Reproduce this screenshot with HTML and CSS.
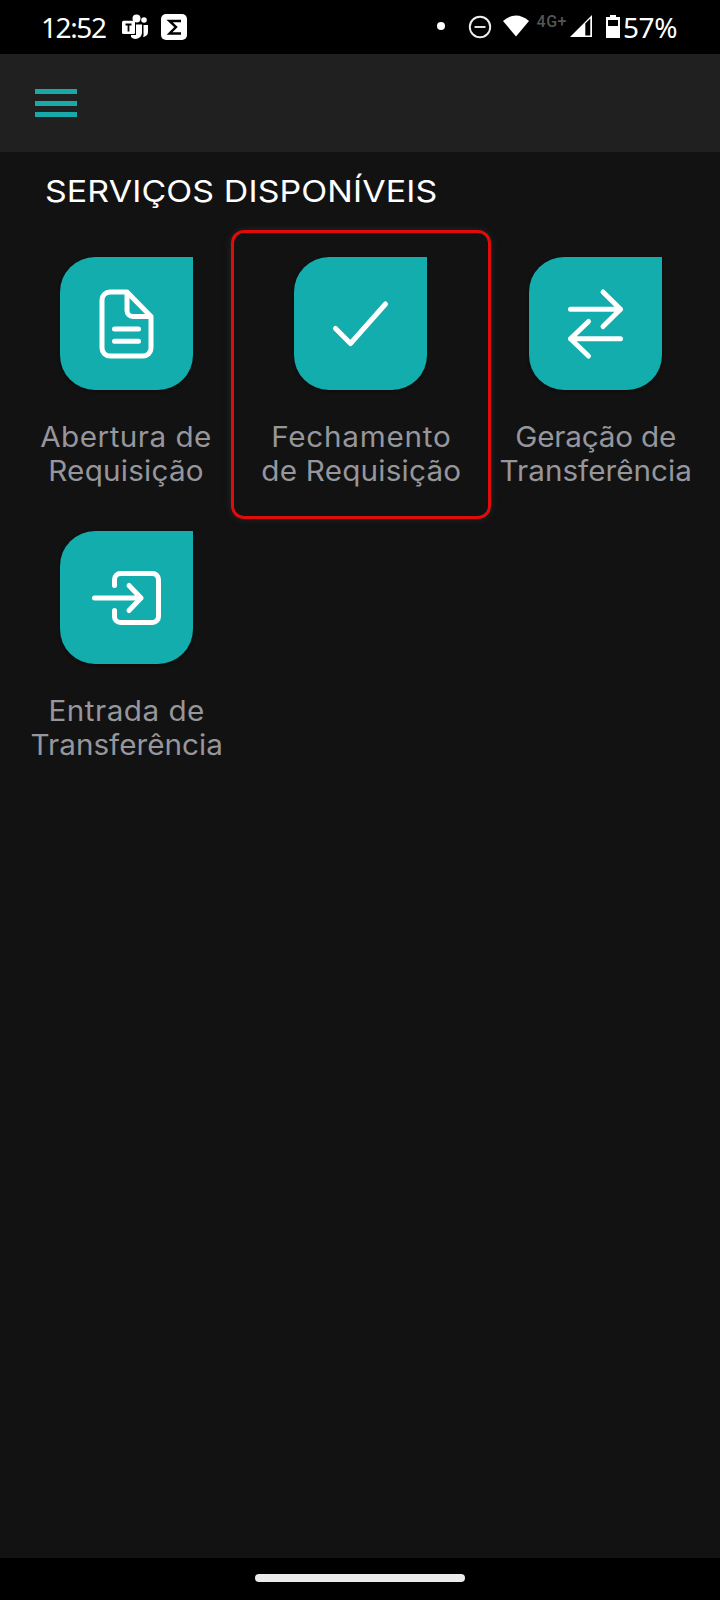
FILE: index.html
```html
<!DOCTYPE html>
<html lang="pt-BR">
<head>
<meta charset="utf-8">
<title>Serviços</title>
<link rel="stylesheet" href="styles.css">
</head>
<body>
<div class="screen">
  <div class="status">
    <span class="clock">12:52</span>
    <svg class="teams" width="28" height="26" viewBox="0 0 28 26" fill="#fff">
      <circle cx="14.500" cy="4.500" r="4"/><circle cx="22" cy="6" r="2.800"/>
      <path d="M14 10.500h6v8.500a6.500 6.500 0 0 1-11 4v-2h5z"/>
      <path d="M21.500 11H26v7a5 5 0 0 1-5 5q1-2 .5-4z"/>
      <rect x="0" y="6.700" width="13" height="13.300" rx="1.500"/>
      <path d="M3.500 10.500h6M6.500 10.500v7" fill="none" stroke="#000" stroke-width="1.800"/>
      <path d="M13.500 8.500v12H9" fill="none" stroke="#000" stroke-width="1"/>
    </svg>
    <svg class="sigma" width="26" height="26" viewBox="0 0 26 26">
      <rect width="26" height="26" rx="5" fill="#fff"/>
      <path d="M20 7H8.500l6.500 6-6.500 6.500H20" fill="none" stroke="#000" stroke-width="2.400"/>
    </svg>
    <svg class="indicators" width="186" height="30" viewBox="0 0 186 30">
      <circle cx="5" cy="14" r="4" fill="#fff"/>
      <circle cx="44" cy="15" r="10.200" fill="none" stroke="#eee" stroke-width="1.900"/>
      <path d="M38.500 15h11" stroke="#eee" stroke-width="1.900"/>
      <path d="M67 9Q80 -2 93 9L80 24.500z" fill="#fff"/>
      <text class="network" x="100.500" y="15" textLength="30">4G+</text>
      <path d="M134 25L156 3V25z" fill="#fff"/><path d="M149.300 11.500L154.300 6.500V23.500H149.300z" fill="#000"/>
      <path d="M170 5h4V3h6v2h4v21h-14z" fill="#fff"/><path d="M172 8h10v6h-10z" fill="#000"/>
    </svg>
    <span class="percent">57%</span>
  </div>
  <header class="appbar">
    <div class="menu"><i></i><i></i><i></i></div>
  </header>
  <main>
    <h1 class="title">SERVIÇOS DISPONÍVEIS</h1>
    <div class="grid">
      <div class="card">
        <div class="tile"><svg width="133" height="133" viewBox="0 0 133 133">
          <path d="M67 35H50a8 8 0 0 0-8 8v48a8 8 0 0 0 8 8h33a8 8 0 0 0 8-8V59.500zM67 35v18.500a6 6 0 0 0 6 6h18M54.500 72h24M54.500 84.300h24"/>
        </svg></div>
        <div class="label"><span class="wide">Abertura de</span><span class="snug">Requisição</span></div>
      </div>
      <div class="card selected">
        <div class="tile"><svg width="133" height="133" viewBox="0 0 133 133">
          <path d="M41.500 71.500L56.500 86.500L91.500 47"/>
        </svg></div>
        <div class="label"><span class="wider">Fechamento</span><span class="snug">de Requisição</span></div>
      </div>
      <div class="card">
        <div class="tile"><svg width="133" height="133" viewBox="0 0 133 133">
          <path d="M41.500 52.300H91.500M74 35L91.500 52.300L74 69.500M91.500 81.700H41.500M59.500 64.500L41.500 81.700L59.500 99"/>
        </svg></div>
        <div class="label"><span class="tight">Geração de</span><span>Transferência</span></div>
      </div>
      <div class="card">
        <div class="tile"><svg width="133" height="133" viewBox="0 0 133 133">
          <path d="M54.500 54.500V48.500a6 6 0 0 1 6-6H92.500a6 6 0 0 1 6 6V85.500a6 6 0 0 1-6 6H60.500a6 6 0 0 1-6-6V79.500M34.500 67H81M69 54.500L81 67L69 79.500"/>
        </svg></div>
        <div class="label"><span class="wide">Entrada de</span><span>Transferência</span></div>
      </div>
    </div>
  </main>
  <footer class="nav"><div class="handle"></div></footer>
</div>
</body>
</html>
```
FILE: styles.css
```css
* { box-sizing: border-box; }
body { margin: 0; background: #121212; font-family: Inter, sans-serif; }
.screen { width: 720px; height: 1600px; display: flex; flex-direction: column; background: #121212; }
.status { height: 54px; background: #000; color: #fff; display: flex; align-items: center; font-family: "Noto Sans", sans-serif; font-size: 28px; line-height: 54px; }
.clock { width: 80px; margin-left: 41px; letter-spacing: -1.4px; }
.teams { margin-left: 1px; }
.sigma { margin-left: 11px; }
.indicators { margin-left: 249px; }
.percent { margin-left: 1px; letter-spacing: -0.4px; }
.network { font: 500 16px Roboto, sans-serif; fill: #555; }
.appbar { height: 98px; background: #202020; padding: 35px; }
.menu { width: 42px; height: 28px; display: flex; flex-direction: column; justify-content: space-between; }
.menu i { height: 5px; background: #1aa9a9; }
main { flex: 1; }
.title { width: fit-content; margin: 19px 0 0 45px; height: 41px; line-height: 40px; font-size: 30px; font-weight: 400; color: #fff; letter-spacing: 0.1px; white-space: nowrap; transform: scaleX(1.13); transform-origin: left; }
.grid { display: grid; grid-template-columns: repeat(3, 1fr); grid-auto-rows: 274px; padding: 45px 7px 0 9px; }
.card { position: relative; display: flex; flex-direction: column; align-items: center; gap: 31px; }
.selected::after { content: ""; position: absolute; box-sizing: border-box; left: -13px; top: -27px; width: 260px; height: 289px; border: 3px solid #e00c0c; border-radius: 13px; box-shadow: 0 0 7px #292525; }
.tile { width: 133px; height: 133px; background: #13adae; border-radius: 35px 0 35px 35px; box-shadow: 0 1px 3px #0a0a0a; }
.tile svg { display: block; fill: none; stroke: #fff; stroke-width: 5; stroke-linecap: round; stroke-linejoin: round; }
.label { display: flex; flex-direction: column; align-items: center; font-size: 28px; line-height: 33.5px; font-weight: 400; color: #96969c; white-space: nowrap; transform: scaleX(1.06); }
.wide { letter-spacing: 0.45px; }
.wider { letter-spacing: 0.7px; }
.snug { letter-spacing: 0.2px; }
.tight { letter-spacing: -0.2px; }
.nav { height: 42px; background: #000; display: flex; justify-content: center; padding-top: 16px; }
.handle { width: 210px; height: 8px; border-radius: 4px; background: #ebebeb; }
```
